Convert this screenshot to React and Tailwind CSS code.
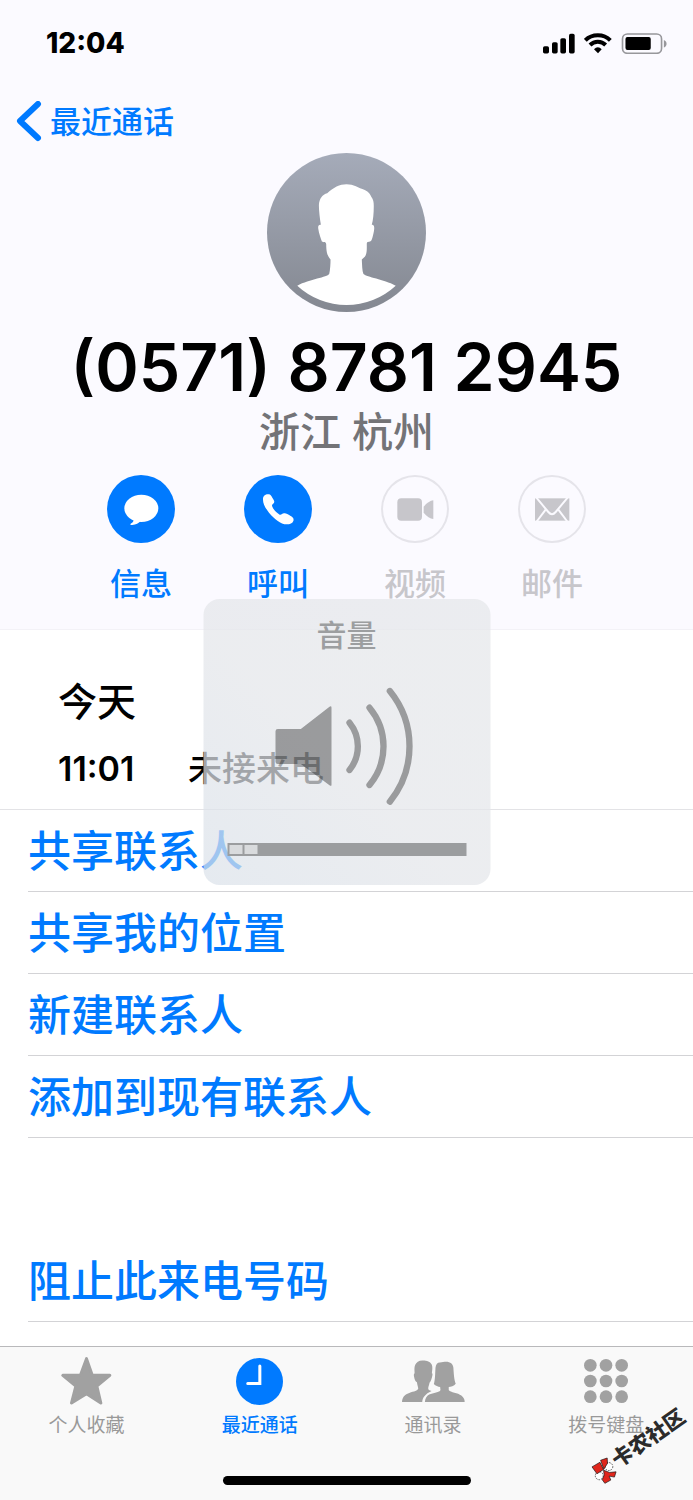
import React from 'react';

const SignalIcon = () => (
  <svg viewBox="69 66 96 62" className="w-8 h-[21px]" fill="currentColor">
    <rect x="69" y="105" width="18" height="22" rx="5" />
    <rect x="96" y="93" width="17" height="34" rx="5" />
    <rect x="121" y="81" width="17" height="46" rx="5" />
    <rect x="147" y="68" width="17" height="59" rx="5" />
  </svg>
);

const WifiIcon = () => (
  <svg viewBox="193 65 84 63" className="w-7 h-[21px]" fill="none" stroke="currentColor" strokeWidth="12">
    <path d="M197 87 C217 67 252 67 272 87" />
    <path d="M211 101 C224 88 245 88 258 101" />
    <path d="M223 114 C230 106 239 106 246 114 L235 126 Z" fill="currentColor" stroke="none" />
  </svg>
);

const BatteryIcon = () => (
  <svg viewBox="303 65 140 64" className="w-[47px] h-[21px]">
    <rect x="306" y="68" width="119" height="59" rx="15" fill="none" stroke="#97979b" strokeWidth="5" />
    <rect x="315" y="77" width="77" height="40" rx="6" fill="#000" />
    <path d="M432 86 C443 90 443 105 432 109 Z" fill="#97979b" />
  </svg>
);

const Avatar = () => (
  <svg viewBox="51 38 478 478" className="w-[159px] h-[159px]">
    <defs>
      <linearGradient id="avatarFill" x1="0" y1="0" x2="0" y2="1">
        <stop offset="0" stopColor="#a5abb9" />
        <stop offset="1" stopColor="#848891" />
      </linearGradient>
    </defs>
    <circle cx="290" cy="277" r="239" fill="url(#avatarFill)" />
    <path
      fill="#fff"
      d="M290 132 C312 132 325 143 345 149 C357 155 362 163 364 169 C371 178 372 186 372 197 C372 220 370 240 366 254 C376 253 374 268 371 280 C368 292 366 303 362 303 C357 306 352 303 351 310 C351 328 352 340 345 350 L336 358 C337 375 337 392 341 402 C352 412 400 417 438 437 A218 218 0 0 1 142 437 C180 417 232 412 238 402 C241 390 242 370 242 358 C234 348 229 340 229 312 C228 303 222 308 216 304 C213 295 207 280 205 265 C204 256 207 253 213 254 C210 235 207 212 207 195 C208 175 218 163 232 159 C250 142 270 132 290 132 Z"
    />
  </svg>
);

const MessageIcon = () => (
  <svg viewBox="50 44 204 204" className="w-full h-full" fill="#fff">
    <ellipse cx="153" cy="144" rx="51" ry="41" />
    <path d="M128 172 C133 182 127 186 121 190 C119 193 121 195 126 194 C137 193 145 189 151 182 Z" />
  </svg>
);

const PhoneIcon = () => (
  <svg viewBox="460 44 204 204" className="w-full h-full" fill="#fff">
    <path d="M517 118 C516 108 523 102 532 102 C538 100 541 104 545 112 C550 119 553 124 549 129 C544 133 543 135 545 139 C549 149 558 157 567 163 C572 165 574 160 580 159 C586 158 590 161 600 167 C608 171 610 176 608 182 C606 189 598 192 588 192 C570 192 550 175 535 157 C524 143 517 130 517 118 Z" />
  </svg>
);

const VideoIcon = () => (
  <svg viewBox="91 44 204 204" className="w-full h-full" fill="#c7c6cb">
    <rect x="140" y="114" width="74" height="67" rx="12" />
    <path d="M219 139 C228 128 239 121 248 120 V176 C239 175 228 168 219 157 Z" />
  </svg>
);

const MailIcon = () => (
  <svg viewBox="501 44 204 204" className="w-full h-full">
    <rect x="552" y="114" width="103" height="67" fill="#c7c6cb" />
    <g fill="none" stroke="#fbfaff" strokeWidth="6">
      <path d="M553 108 L592 155 Q603 168 614 155 L653 108" />
      <path d="M584 148 L556 185" />
      <path d="M622 148 L650 185" />
    </g>
  </svg>
);

const SpeakerIcon = () => (
  <svg viewBox="252 294 435 354" className="w-[145px] h-[118px] mt-8 opacity-[0.34]" fill="none" stroke="#000" strokeWidth="19" strokeLinecap="round">
    <path
      d="M262 420 H331 L417 353 Q423 350 423 356 V587 Q423 593 417 589 L331 525 H262 Q255 525 255 518 V427 Q255 420 262 420 Z"
      fill="#000"
      stroke="none"
    />
    <path d="M477 401 A113 113 0 0 1 477 543" />
    <path d="M537 356 A181 181 0 0 1 537 588" />
    <path d="M598 306 A263 263 0 0 1 598 638" />
  </svg>
);

const StarIcon = () => (
  <svg viewBox="183 77 152 144" className="w-[51px] h-12" fill="#a1a1a1" stroke="#a1a1a1" strokeWidth="9" strokeLinejoin="round">
    <path d="M259 82 L276 131 L329 132 L290 164 L302 215 L259 187 L214 215 L227 164 L188 132 L241 131 Z" />
  </svg>
);

const ClockIcon = () => (
  <svg viewBox="710 85 140 140" className="w-[47px] h-[47px]">
    <circle cx="780" cy="155" r="70" fill="#007aff" />
    <path d="M781 109 V161 H745" fill="none" stroke="#fff" strokeWidth="9" strokeLinecap="round" />
  </svg>
);

const PeopleIcon = () => (
  <svg viewBox="176 90 190 126" className="w-[63px] h-[42px]" fill="#a1a1a1">
    <path d="M240 91 C228 90 219 96 216 104 C212 112 214 122 214 130 C210 132 212 140 214 147 C216 153 218 155 221 157 C222 165 224 170 225 175 C224 183 212 184 198 189 C182 194 177 203 176 216 H237 C238 203 246 192 265 183 C258 181 255 180 255 175 C256 168 258 165 259 158 C264 152 266 145 268 134 C268 131 267 130 266 130 C267 122 269 112 266 104 C262 94 250 91 240 91 Z" />
    <path d="M290 97 C297 97 303 95 309 95 C322 95 330 102 331 113 C332 130 333 150 338 161 C333 168 323 171 317 171 V180 C322 188 345 188 355 197 C362 203 365 208 365 216 H245 C246 206 250 198 258 194 C270 188 290 188 292 180 L291 171 C285 171 277 167 272 162 C276 150 276 130 277 113 C278 102 283 97 290 97 Z" />
  </svg>
);

const KeypadIcon = () => (
  <svg viewBox="0 0 132 132" className="w-11 h-11" fill="#a1a1a1">
    {[19, 66, 113].map((y) =>
      [19, 66, 113].map((x) => <circle key={`${x}-${y}`} cx={x} cy={y} r="19" />)
    )}
  </svg>
);

const RibbonLogo = () => (
  <svg viewBox="66 193 78 82" className="w-[26px] h-[27px] shrink-0 rotate-[35deg]" stroke="#111" strokeWidth="2">
    <circle cx="120" cy="222" r="12" fill="#fff" strokeDasharray="5 3" />
    <circle cx="91" cy="250" r="12" fill="#fff" strokeDasharray="5 3" />
    <path d="M69 223 L93 209 L104 231 L84 244 Z" fill="#e0261c" />
    <path d="M95 203 L115 196 L116 212 L105 230 Z" fill="#e0261c" />
    <path d="M104 233 L122 240 L142 238 L137 254 L121 251 L126 263 L108 273 L100 262 L106 248 Z" fill="#e0261c" />
  </svg>
);

const App = () => {
  const actions = [
    { label: '信息', icon: <MessageIcon />, enabled: true },
    { label: '呼叫', icon: <PhoneIcon />, enabled: true },
    { label: '视频', icon: <VideoIcon />, enabled: false },
    { label: '邮件', icon: <MailIcon />, enabled: false },
  ];

  const options = ['共享联系人', '共享我的位置', '新建联系人', '添加到现有联系人'];

  const tabs = [
    { label: '个人收藏', icon: <StarIcon />, active: false },
    { label: '最近通话', icon: <ClockIcon />, active: true },
    { label: '通讯录', icon: <PeopleIcon />, active: false },
    { label: '拨号键盘', icon: <KeypadIcon />, active: false },
  ];

  const rowClass =
    'block w-full h-[82px] border-b border-[#d3d3d6] text-left text-[43px] leading-[82px] font-medium text-[#007aff]';

  return (
    <div className="relative flex flex-col min-h-screen overflow-hidden bg-white text-black font-['Inter','Noto_Sans_CJK_SC',sans-serif]">
      {/* Contact header */}
      <header className="bg-[#fbfaff] border-b border-[#f3f2f7]">
        <div className="flex items-center justify-between h-[86px] pl-[46px] pr-[25px]">
          <time className="text-[28px] leading-8 font-extrabold">12:04</time>
          <div className="flex items-center gap-[9px]">
            <SignalIcon />
            <WifiIcon />
            <BatteryIcon />
          </div>
        </div>

        <nav className="flex items-center h-[67px] pl-4 pt-1">
          <a href="#recents" className="flex items-center gap-2 text-[31px] leading-10 font-medium text-[#007aff]">
            <svg viewBox="0 0 26 42" className="w-[26px] h-[42px]" fill="none" stroke="currentColor" strokeWidth="6" strokeLinecap="round" strokeLinejoin="round">
              <path d="M22 3 L4 20 L22 37" />
            </svg>
            最近通话
          </a>
        </nav>

        <div className="flex flex-col items-center">
          <Avatar />
          <h1 className="mt-[17px] text-[66px] leading-[76px] font-semibold whitespace-nowrap">(0571) 8781 2945</h1>
          <p className="text-[41px] leading-[54px] font-medium text-[#737377]">浙江 杭州</p>
        </div>

        <div className="flex justify-center gap-[69px] pt-4 pb-[25px]">
          {actions.map((action) => (
            <button
              key={action.label}
              disabled={!action.enabled}
              className={`flex flex-col items-center w-[68px] font-medium ${action.enabled ? 'text-[#007aff]' : 'text-[#c7c6cb]'}`}
            >
              <span className={`w-[68px] h-[68px] rounded-full ${action.enabled ? 'bg-[#007aff]' : 'ring-2 ring-inset ring-[#e5e4ea]'}`}>
                {action.icon}
              </span>
              <span className="mt-[21px] text-[31px] leading-10">{action.label}</span>
            </button>
          ))}
        </div>
      </header>

      <main>
        {/* Call history */}
        <section className="pl-[58px] pt-11 pb-4 border-b border-[#e3e3e6] font-medium">
          <h2 className="text-[39px] leading-[56px]">今天</h2>
          <div className="flex mt-[15px] text-[34px] leading-[48px]">
            <time className="w-[130px] font-semibold">11:01</time>
            <span>未接来电</span>
          </div>
        </section>

        {/* Options */}
        <div className="pl-7">
          {options.map((option) => (
            <button key={option} className={rowClass}>{option}</button>
          ))}
          <button className={`${rowClass} mt-[102px]`}>阻止此来电号码</button>
        </div>
      </main>

      {/* Tab bar */}
      <footer className="mt-auto bg-[#f9f9f9] border-t border-[#b9b9bb]">
        <nav className="grid grid-cols-4 pt-1.5">
          {tabs.map((tab) => (
            <a key={tab.label} href="#tab" className={`flex flex-col items-center ${tab.active ? 'text-[#007aff] font-medium' : 'text-[#999]'}`}>
              <span className="flex items-center justify-center h-14">{tab.icon}</span>
              <span className="mt-[3px] text-[19px] leading-7">{tab.label}</span>
            </a>
          ))}
        </nav>
        <div className="w-[248px] h-[9px] mx-auto mt-9 mb-[15px] rounded-full bg-black" />
      </footer>

      {/* Volume overlay */}
      <div className="absolute top-[599px] left-1/2 -translate-x-1/2 flex flex-col items-center w-[287px] h-[286px] pt-4 rounded-2xl bg-linear-to-tr from-[#dbe2ea]/72 via-[#e4e6ea]/72 via-45% to-[#e5e7ea]/72">
        <p className="text-[30px] leading-10 font-medium text-[#9c9ea0]">音量</p>
        <SpeakerIcon />
        <div role="progressbar" aria-label="音量" aria-valuenow={2} aria-valuemin={0} aria-valuemax={16} className="flex items-center gap-0.5 w-[239px] h-[13px] mt-[38px] pl-0.5 bg-[#9b9d9f]">
          <span className="w-[13px] h-[9px] bg-[#d9dbdd]" />
          <span className="w-[13px] h-[9px] bg-[#d9dbdd]" />
        </div>
      </div>

      {/* Watermark */}
      <div className="absolute right-0 bottom-10 flex items-center -rotate-[35deg] text-[21px] leading-7 font-black text-[#2b2b2b]">
        <RibbonLogo />
        卡农社区
      </div>
    </div>
  );
};

export default App;
